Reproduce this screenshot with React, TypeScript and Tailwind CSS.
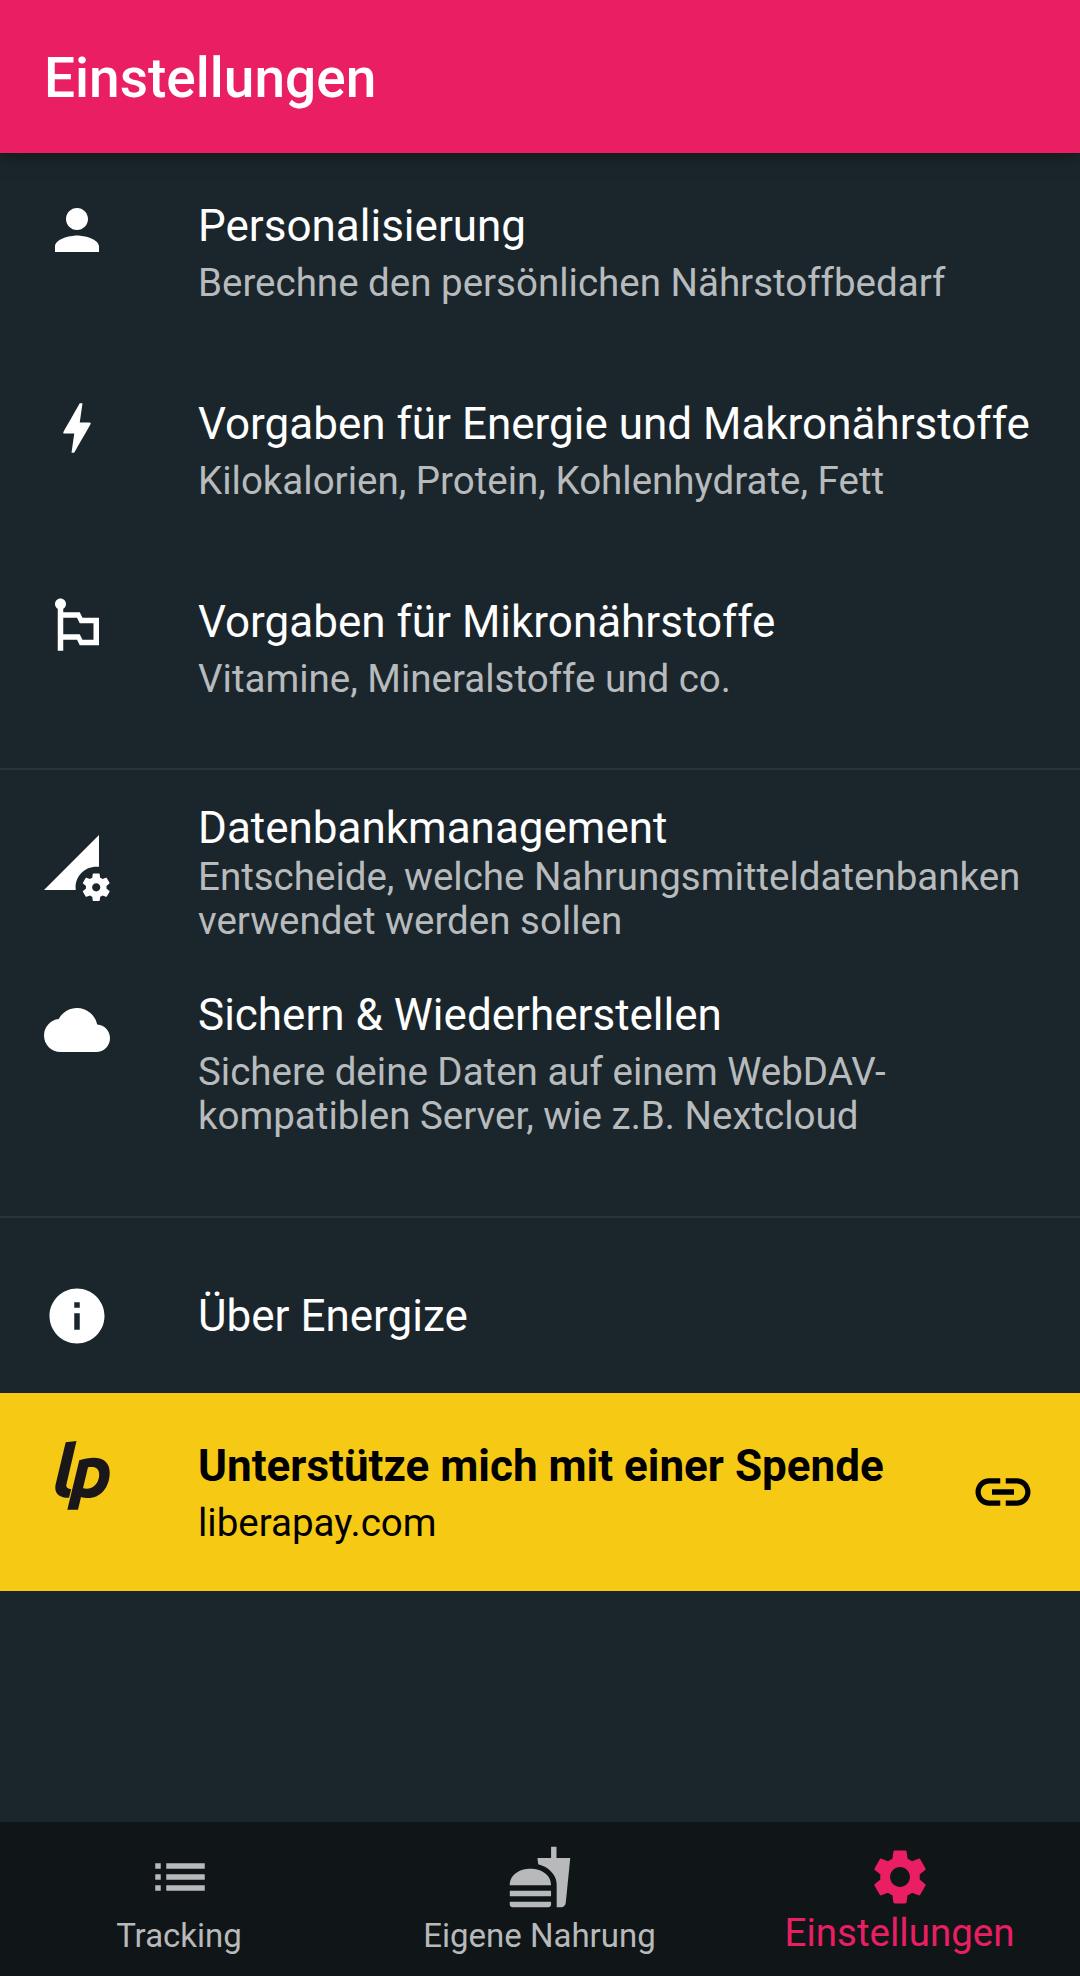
import type { ReactNode } from "react";
import {
  MdPerson, MdBolt, MdEmojiFlags, MdPermDataSetting, MdCloud, MdInfo,
  MdInsertLink, MdList, MdFastfood, MdSettings,
} from "react-icons/md";

function LiberapayLogo() {
  return (
    <svg viewBox="0 0 55 72" className="h-[72px] w-[55px]" fill="#1a171b">
      <path d="M10.700 2.300 21.500 1 11.400 44.500C10.800 47.300 12.500 49 16.200 49.300L14 57.700C3.500 57.700-1 53 .600 44.500z" />
      <path fillRule="evenodd" d="M24.300 20.300C29 18.500 34 17.700 38.500 17.700 49.500 17.700 54.700 23.500 54.700 32.500 54.700 47.500 45.500 58 33.300 58 30.500 58 28 57.700 26 57L23 69.700H12.300zM33 27.300 28 48.300C36.500 50.500 44.200 44.500 44.200 34.500 44.200 28.500 40.500 26 33 27.300z" />
    </svg>
  );
}

type RowProps = {
  icon: ReactNode;
  title: string;
  subtitle?: string;
  className: string;
  textClass?: string;
  subtitleClass?: string;
};

function Row({ icon, title, subtitle, className, textClass = "pt-[47px]", subtitleClass = "mt-[9px]" }: RowProps) {
  return (
    <div className={`flex items-start pl-11 ${className}`}>
      <div className="mr-[88px] w-[66px] shrink-0 pt-[44px] text-[66px]">{icon}</div>
      <div className={`min-w-0 ${textClass}`}>
        <div className="whitespace-nowrap text-[44px] leading-[52px]">{title}</div>
        {subtitle && (
          <div className={`w-[838px] whitespace-pre-line text-[38.5px] leading-[44px] text-[#b8bbbd] ${subtitleClass}`}>{subtitle}</div>
        )}
      </div>
    </div>
  );
}

export default function App() {
  return (
    <div className="flex h-[1976px] w-[1080px] flex-col overflow-hidden bg-[#1b262c] font-[Roboto,sans-serif] text-white">
      <header className="z-10 flex h-[153px] shrink-0 items-center bg-[#e91e63] pl-11 pt-[2px] shadow-[0_6px_14px_rgba(20,20,20,0.6)]">
        <h1 className="text-[55px] font-medium leading-[64px]">Einstellungen</h1>
      </header>
      <main className="flex grow flex-col">
        <Row className="h-[198px]" icon={<MdPerson />} title="Personalisierung" subtitle="Berechne den persönlichen Nährstoffbedarf" />
        <Row className="h-[198px]" icon={<MdBolt />} title="Vorgaben für Energie und Makronährstoffe" subtitle="Kilokalorien, Protein, Kohlenhydrate, Fett" />
        <Row className="h-[219px]" icon={<MdEmojiFlags />} title="Vorgaben für Mikronährstoffe" subtitle="Vitamine, Mineralstoffe und co." />
        <div className="h-[2px] bg-[#29333a]" />
        <Row className="h-[183px]" icon={<MdPermDataSetting className="mt-[21px]" />} title="Datenbankmanagement" subtitle={"Entscheide, welche Nahrungsmitteldatenbanken\nverwendet werden sollen"} textClass="pt-[32px]" subtitleClass="mt-px" />
        <Row className="h-[263px]" icon={<MdCloud />} title="Sichern & Wiederherstellen" subtitle={"Sichere deine Daten auf einem WebDAV-\nkompatiblen Server, wie z.B. Nextcloud"} textClass="pt-[36px]" />
        <div className="h-[2px] bg-[#29333a]" />
        <Row className="h-[175px]" icon={<MdInfo className="mt-[21px]" />} title="Über Energize" textClass="pt-[72px]" />
        <div className="flex h-[198px] items-center justify-between bg-[#f6c915] pr-11 text-black">
          <div className="flex h-full items-start pl-11 pt-[47px]">
            <div className="mr-[88px] flex w-[66px] justify-end"><LiberapayLogo /></div>
            <div>
              <div className="whitespace-nowrap text-[44px] font-bold leading-[52px]">Unterstütze mich mit einer Spende</div>
              <div className="mt-[9px] text-[38.5px] leading-[44px]">liberapay.com</div>
            </div>
          </div>
          <MdInsertLink className="text-[66px]" />
        </div>
      </main>
      <nav className="grid h-[154px] shrink-0 grid-cols-3 bg-[#101518] text-[#b7b9ba]">
        <div className="flex flex-col items-center pt-[22px]">
          <MdList className="text-[66px]" />
          <span className="mt-[6px] pr-[2px] text-[33px] leading-[39px]">Tracking</span>
        </div>
        <div className="flex flex-col items-center pt-[22px]">
          <MdFastfood className="text-[66px]" />
          <span className="mt-[6px] pr-px text-[33px] leading-[39px]">Eigene Nahrung</span>
        </div>
        <div className="flex flex-col items-center pt-[22px] text-[#e91e63]">
          <MdSettings className="text-[66px]" />
          <span className="pr-px text-[38.5px] leading-[45px]">Einstellungen</span>
        </div>
      </nav>
    </div>
  );
}
